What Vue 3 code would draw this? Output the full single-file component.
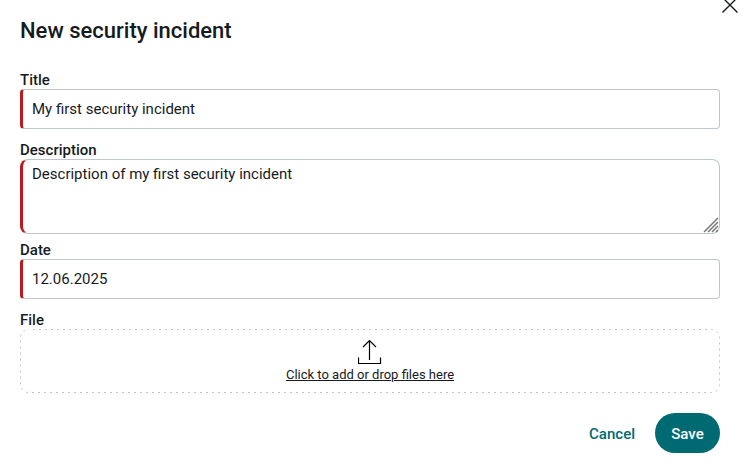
<script setup>
import { ref } from 'vue'

const title = ref('My first security incident')
const description = ref('Description of my first security incident')
const date = ref('12.06.2025')
</script>

<template>
  <form class="dialog" @submit.prevent>
    <header class="header">
      <h1>New security incident</h1>
      <button class="close" type="button" aria-label="Close">
        <svg width="18" height="18" viewBox="0 0 18 18" aria-hidden="true">
          <path d="M1.5 1.5l15 15M16.5 1.5l-15 15" />
        </svg>
      </button>
    </header>

    <div class="field">
      <label for="title">Title</label>
      <input id="title" v-model="title" class="control" type="text" required />
    </div>

    <div class="field field-area">
      <label for="description">Description</label>
      <div class="area">
        <textarea id="description" v-model="description" class="control" required></textarea>
        <svg class="grip" width="16" height="16" viewBox="0 0 16 16" aria-hidden="true">
          <path d="M1 15L15 1M5 15L15 5M9 15l6-6M13 15l2-2" />
        </svg>
      </div>
    </div>

    <div class="field">
      <label for="date">Date</label>
      <input id="date" v-model="date" class="control" type="text" required />
    </div>

    <div class="field-file">
      <span id="file-label" class="label">File</span>
      <button class="dropzone" type="button" aria-describedby="file-label">
        <svg class="outline" aria-hidden="true">
          <rect x="0.5" y="0.5" rx="8" stroke-dasharray="2 4" stroke-dashoffset="1.5" />
        </svg>
        <svg class="upload" width="24" height="26" viewBox="0 0 24 26" aria-hidden="true">
          <path d="M0.5 18.5v6h22v-6M11.5 21V1.5M5 8l6.5-6.5L18 8" />
        </svg>
        <span class="prompt">Click to add or drop files here</span>
      </button>
    </div>

    <footer class="actions">
      <button class="cancel" type="button">Cancel</button>
      <button class="save" type="submit">Save</button>
    </footer>
  </form>
</template>

<style>
body {
  background: #fff;
}
</style>

<style scoped>
.dialog {
  position: relative;
  padding: 17px 23px 14px 20px;
  color: #161b1d;
  font-family: Roboto, "Liberation Sans", sans-serif;
  font-size: 15px;
  overflow: hidden;
}

.dialog * {
  box-sizing: border-box;
}

button {
  margin: 0;
  padding: 0;
  border: 0;
  background: none;
  color: inherit;
  font: inherit;
  cursor: pointer;
}

.header {
  margin-bottom: 27px;
}

h1 {
  margin: 0;
  font-size: 22px;
  font-weight: 500;
  line-height: 28px;
}

.close {
  position: absolute;
  top: -4px;
  right: 4px;
  width: 18px;
  height: 18px;
}

.close path {
  stroke-width: 1.4;
}

svg {
  display: block;
  fill: none;
  stroke: #161b1d;
}

.upload {
  stroke: #000;
}

.upload path {
  stroke-width: 1.2;
}

.field {
  margin-bottom: 13px;
}

.field-area {
  margin-bottom: 8px;
}

label,
.label {
  display: block;
  font-weight: 500;
  line-height: 17px;
}

.control {
  display: block;
  width: 100%;
  height: 40px;
  margin: 0;
  padding: 0 9px;
  border: 1px solid #bdc7c9;
  border-left: 3px solid #bb1b1e;
  border-radius: 4px;
  outline: 0;
  background: #fff;
  color: inherit;
  font: inherit;
}

.area {
  position: relative;
}

textarea.control {
  height: 75px;
  padding: 4px 9px;
  border-radius: 8px;
  line-height: 20px;
  resize: none;
}

.grip {
  position: absolute;
  right: 1px;
  bottom: 1px;
  stroke: #77777b;
}

.grip path {
  stroke-width: 1.5;
}

.dropzone {
  position: relative;
  display: flex;
  flex-direction: column;
  align-items: center;
  width: 100%;
  padding: 10px 0 9px;
}

.outline {
  position: absolute;
  inset: 0;
  width: 100%;
  height: 100%;
}

.outline rect {
  width: calc(100% - 1px);
  height: calc(100% - 1px);
  stroke: #c0c2c3;
}

.prompt {
  margin-top: 1px;
  font-size: 13px;
  line-height: 18px;
  text-decoration: underline;
}

.actions {
  display: flex;
  justify-content: flex-end;
  gap: 20px;
  margin-top: 20px;
}

.cancel,
.save {
  height: 40px;
  padding-top: 2px;
  font-weight: 500;
}

.cancel {
  color: #006a72;
}

.save {
  min-width: 65px;
  padding-inline: 16px;
  border-radius: 20px;
  background: #006a72;
  color: #fff;
}
</style>
